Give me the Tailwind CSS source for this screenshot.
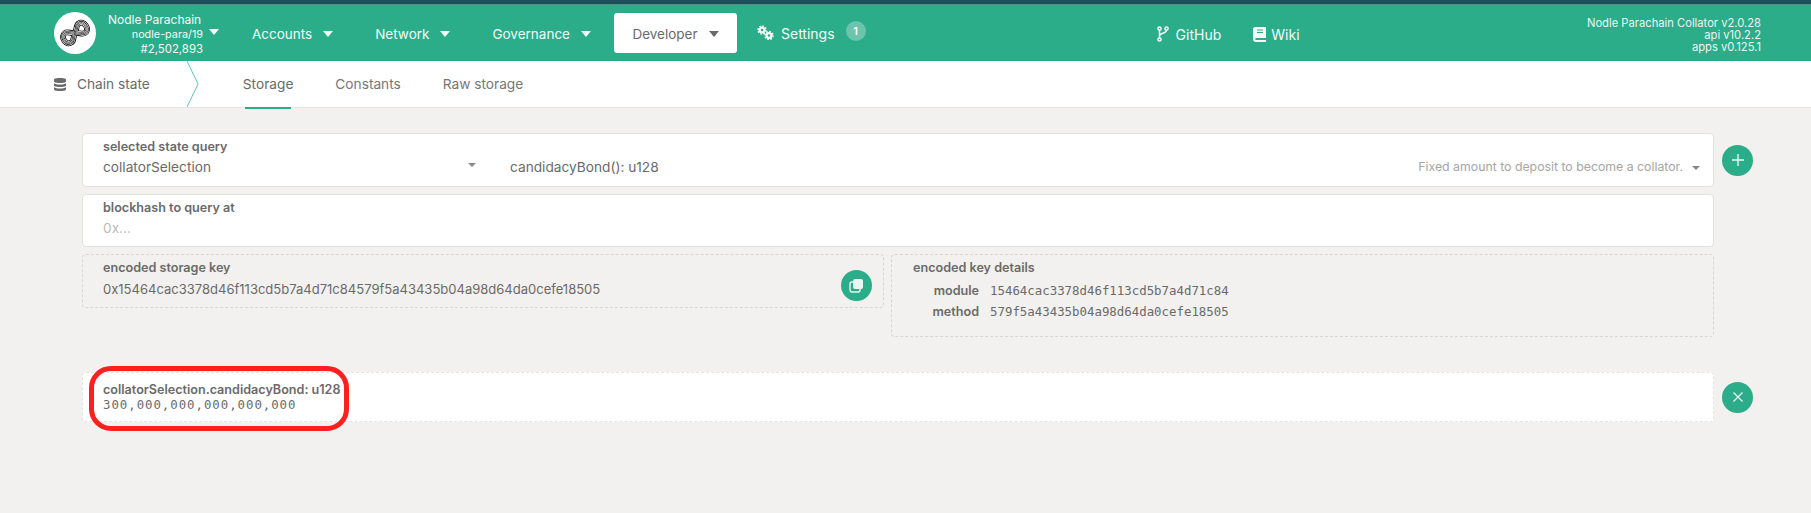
<!DOCTYPE html>
<html lang="en">
<head>
    <meta charset="UTF-8">
    <title>Nodle Parachain - Chain state</title>
    <script src="https://cdn.jsdelivr.net/npm/@tailwindcss/browser@4"></script>
</head>
<body class="bg-[#f2f1ef] font-['Inter',sans-serif] text-[#6a6a6a] h-[513px] overflow-hidden">
    <div class="h-[4px] bg-[#14535a]"></div>
    <div class="h-px bg-[#4b8f86]"></div>

    <!-- top menu -->
    <header class="relative h-[56px] bg-[#2bad89] text-[#f4faf8] flex items-center">
        <div class="ml-[54px] w-[42px] h-[42px] rounded-full bg-white flex items-center justify-center">
            <svg width="34" height="30" viewBox="-17 -15 34 30" fill="none">
                <defs>
                    <path id="loop" d="M0 0C5 -2.5 6 -7 10 -7C14 -7 16 -4 16 0C16 4 14 7 10 7C6 7 5 2.5 0 0C-5 -2.5 -6 -7 -10 -7C-14 -7 -16 -4 -16 0C-16 4 -14 7 -10 7C-6 7 -5 2.5 0 0Z"/>
                </defs>
                <g transform="rotate(-35) scale(0.82)">
                    <use href="#loop" stroke="#111" stroke-width="7"/>
                    <use href="#loop" stroke="#fff" stroke-width="5"/>
                    <use href="#loop" stroke="#111" stroke-width="3.6"/>
                    <use href="#loop" stroke="#fff" stroke-width="2"/>
                    <use href="#loop" stroke="#111" stroke-width="0.8"/>
                </g>
            </svg>
        </div>
        <div class="ml-[12px] w-[95px] pt-[2px] text-right text-[12px] leading-[14px]">
            <div class="text-left">Nodle Parachain</div>
            <div class="mt-[1px] text-[10.8px]">nodle-para/19</div>
            <div class="text-[11.4px]">#2,502,893</div>
        </div>
        <span class="ml-[6px] mt-[-3px] w-0 h-0 border-x-[5px] border-x-transparent border-t-[6px] border-t-[#f4faf8]"></span>
        <nav class="flex items-center text-[13.5px]">
            <a class="ml-[33px] pt-[2px] flex items-center">Accounts<span class="ml-[11px] w-0 h-0 border-x-[5px] border-x-transparent border-t-[6px] border-t-[#f4faf8]"></span></a>
            <a class="ml-[42px] pt-[2px] flex items-center">Network<span class="ml-[11px] w-0 h-0 border-x-[5px] border-x-transparent border-t-[6px] border-t-[#f4faf8]"></span></a>
            <a class="ml-[42px] pt-[2px] flex items-center">Governance<span class="ml-[11px] w-0 h-0 border-x-[5px] border-x-transparent border-t-[6px] border-t-[#f4faf8]"></span></a>
            <a class="ml-[23px] pt-[2px] w-[123px] h-[40px] rounded-[3px] bg-white text-[#6a6a6a] flex items-center justify-center">Developer<span class="ml-[11px] w-0 h-0 border-x-[5px] border-x-transparent border-t-[6px] border-t-[#6a6a6a]"></span></a>
            <a class="ml-[20px] pt-[1px] text-[14px] flex items-center">
                <svg class="mr-[7px] mt-[-3px]" width="17" height="15" viewBox="0 0 17 15" fill="none" stroke="#f4faf8">
                    <circle cx="5" cy="5" r="2.4" stroke-width="2.2"/>
                    <circle cx="5" cy="5" r="4" stroke-width="1.5" stroke-dasharray="1.7 1.4"/>
                    <circle cx="12" cy="10.5" r="2.4" stroke-width="2.2"/>
                    <circle cx="12" cy="10.5" r="4" stroke-width="1.5" stroke-dasharray="1.7 1.4"/>
                </svg>
                Settings
            </a>
            <span class="ml-[11px] mt-[-4px] w-[20px] h-[20px] rounded-full bg-[#6cc4ac] text-white text-[11px] font-semibold flex items-center justify-center">1</span>
        </nav>
        <div class="ml-[291px] pt-[2px] flex items-center text-[14px]">
            <svg class="mr-[7px]" width="12" height="16" viewBox="0 0 12 16" fill="none" stroke="#f4faf8" stroke-width="1.5">
                <circle cx="2.5" cy="2.5" r="1.6"/><circle cx="2.5" cy="13.5" r="1.6"/><circle cx="9.5" cy="2.5" r="1.6"/>
                <path d="M2.5 4V12M9.5 4C9.5 8 2.5 6.5 2.5 10"/>
            </svg>
            GitHub
            <svg class="ml-[32px] mr-[5px]" width="13" height="15" viewBox="0 0 13 15" fill="#f4faf8">
                <path d="M2 0H13V11H3C2 11 2 13 3 13H13V15H3C1 15 0 14 0 12V2C0 1 1 0 2 0Z"/>
                <path d="M4 3H10M4 5.5H10" stroke="#2bad89" stroke-width="1"/>
            </svg>
            Wiki
        </div>
        <div class="absolute right-[50px] top-[12px] text-right text-[11.2px] leading-[12px] text-[#e9f6f2]">
            <div>Nodle Parachain Collator v2.0.28</div>
            <div>api v10.2.2</div>
            <div>apps v0.125.1</div>
        </div>
    </header>

    <!-- sub tabs -->
    <div class="h-[47px] bg-white border-b border-[#e6e6e6] flex items-center text-[13.7px] text-[#777]">
        <svg class="ml-[54px] mr-[11px]" width="12" height="15" viewBox="0 0 12 15" fill="#6a6a6a">
            <path d="M0 2.5C0 .5 12 .5 12 2.5V4.5C12 6.5 0 6.5 0 4.5ZM0 6.2C2 8 10 8 12 6.2V8.5C12 10.5 0 10.5 0 8.5ZM0 10.2C2 12 10 12 12 10.2V12.5C12 14.5 0 14.5 0 12.5Z"/>
        </svg>
        <span class="text-[#6a6a6a]">Chain state</span>
        <svg class="ml-[37px]" width="12" height="46" viewBox="0 0 12 46" fill="none" stroke="#5fc7ab">
            <path d="M0 0L11 23L0 46"/>
        </svg>
        <a class="relative ml-[44px] h-full flex items-center text-[#6a6a6a]">Storage<span class="absolute left-[2px] right-[2px] bottom-[-2px] h-[2px] bg-[#2bad89]"></span></a>
        <a class="ml-[42px]">Constants</a>
        <a class="ml-[42px]">Raw storage</a>
    </div>

    <!-- query form -->
    <main class="ml-[82px] w-[1688px] mt-[25px]">
        <div class="flex items-center">
            <div class="w-[1632px] h-[54px] rounded-[4px] border border-[#e2e2e0] bg-white flex pl-[20px]">
                <div class="w-[378px] pt-[5px] relative">
                    <div class="text-[12.6px] leading-[16px] font-semibold">selected state query</div>
                    <div class="text-[13.7px] leading-[20px] mt-[2px]">collatorSelection</div>
                    <span class="absolute right-[5px] top-[29px] w-0 h-0 border-x-[4px] border-x-transparent border-t-[4px] border-t-[#888]"></span>
                </div>
                <div class="flex-1 flex items-center pt-[15px] pl-[29px] pr-[13px] text-[13.7px]">
                    candidacyBond(): u128
                    <span class="ml-auto text-[12.3px] text-[#a5a5a5]">Fixed amount to deposit to become a collator.</span>
                    <span class="ml-[9px] w-0 h-0 border-x-[4px] border-x-transparent border-t-[4px] border-t-[#888]"></span>
                </div>
            </div>
            <button class="ml-[8px] w-[31px] h-[31px] rounded-full bg-[#2bad89] flex items-center justify-center">
                <svg width="12" height="12" viewBox="0 0 12 12" stroke="#e9f6f2" stroke-width="1.4"><path d="M6 0V12M0 6H12"/></svg>
            </button>
        </div>
        <div class="mt-[7px] w-[1632px] h-[53px] rounded-[4px] border border-[#e2e2e0] bg-white pl-[20px] pt-[5px]">
            <div class="text-[12.6px] leading-[16px] font-semibold">blockhash to query at</div>
            <div class="text-[13.7px] leading-[20px] mt-[2px] text-[#bdbdbd]">0x...</div>
        </div>
        <div class="mt-[7px] w-[1632px] flex items-start">
            <div class="w-[802px] h-[54px] rounded-[4px] border border-dashed border-[#d6d6d4] pl-[20px] pt-[5px] flex relative">
                <div>
                    <div class="text-[12.6px] leading-[16px] font-semibold">encoded storage key</div>
                    <div class="text-[13.03px] leading-[20px] mt-[3px]">0x15464cac3378d46f113cd5b7a4d71c84579f5a43435b04a98d64da0cefe18505</div>
                </div>
                <button class="ml-auto mr-[11px] mt-[10px] w-[31px] h-[31px] rounded-full bg-[#2bad89] flex items-center justify-center">
                    <svg width="15" height="15" viewBox="0 0 15 15"><rect x="1" y="4" width="10" height="10" rx="2" fill="none" stroke="#e9f6f2" stroke-width="1.4"/><rect x="4" y="1" width="10" height="10" rx="2" fill="#e9f6f2"/></svg>
                </button>
            </div>
            <div class="ml-[7px] flex-1 h-[83px] rounded-[4px] border border-dashed border-[#d6d6d4] pl-[21px] pt-[5px]">
                <div class="text-[12.6px] leading-[16px] font-semibold">encoded key details</div>
                <div class="mt-[5px] flex items-center h-[21px]">
                    <span class="w-[66px] text-right text-[12.6px] font-semibold">module</span>
                    <span class="ml-[11px] font-['DejaVu_Sans_Mono',monospace] text-[12.4px]">15464cac3378d46f113cd5b7a4d71c84</span>
                </div>
                <div class="flex items-center h-[21px]">
                    <span class="w-[66px] text-right text-[12.6px] font-semibold">method</span>
                    <span class="ml-[11px] font-['DejaVu_Sans_Mono',monospace] text-[12.4px]">579f5a43435b04a98d64da0cefe18505</span>
                </div>
            </div>
        </div>

        <!-- query result -->
        <div class="mt-[35px] flex items-center">
            <div class="relative w-[1632px] h-[50px] rounded-[4px] border border-dashed border-[#e4e4e2] bg-white pl-[20px] pt-[9px]">
                <div class="text-[12.6px] leading-[15px] font-semibold">collatorSelection.candidacyBond: u128</div>
                <div class="font-['DejaVu_Sans_Mono',monospace] text-[12.4px] leading-[15px] tracking-[0.95px]">300,000,000,000,000,000</div>
                <div class="absolute left-[6px] top-[-7px] w-[260px] h-[65px] rounded-[22px] border-[5px] border-[#ff1f1f]"></div>
            </div>
            <button class="ml-[8px] w-[31px] h-[31px] rounded-full bg-[#2bad89] flex items-center justify-center">
                <svg width="10" height="10" viewBox="0 0 10 10" stroke="#e9f6f2" stroke-width="1.3"><path d="M0.5 0.5L9.5 9.5M9.5 0.5L0.5 9.5"/></svg>
            </button>
        </div>
    </main>
</body>
</html>
